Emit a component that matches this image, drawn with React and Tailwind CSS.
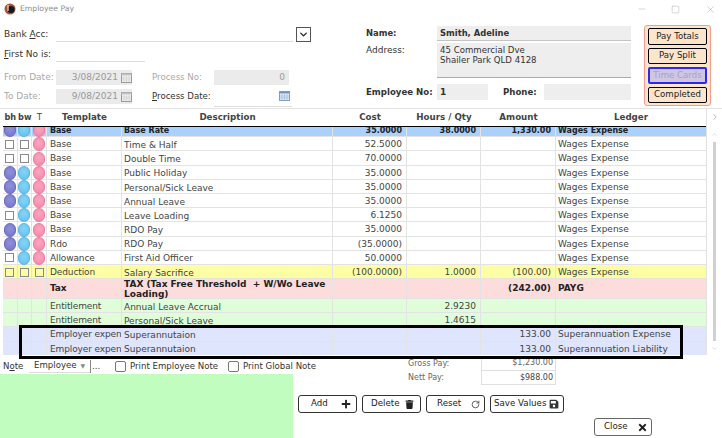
import React from 'react';
import { FaPlus, FaTrash, FaSave, FaTimes } from 'react-icons/fa';
import { RotateCw, ChevronRight, ChevronUp, ChevronDown, Minus, Square, X } from 'lucide-react';

const COLS = 'grid grid-cols-[14.5px_14.5px_15px_75px_211px_74px_74px_75px_150px]';

const rows = [
  { bh: 1, bw: 1, t: 1, template: 'Base', desc: 'Base Rate', cost: '35.0000', qty: '38.0000', amount: '1,330.00', ledger: 'Wages Expense', bg: 'bg-[#a9d1fb]', selected: true },
  { bh: 0, bw: 0, t: 1, template: 'Base', desc: 'Time & Half', cost: '52.5000', ledger: 'Wages Expense' },
  { bh: 0, bw: 0, t: 1, template: 'Base', desc: 'Double Time', cost: '70.0000', ledger: 'Wages Expense' },
  { bh: 1, bw: 1, t: 1, template: 'Base', desc: 'Public Holiday', cost: '35.0000', ledger: 'Wages Expense' },
  { bh: 1, bw: 1, t: 1, template: 'Base', desc: 'Personal/Sick Leave', cost: '35.0000', ledger: 'Wages Expense' },
  { bh: 1, bw: 1, t: 1, template: 'Base', desc: 'Annual Leave', cost: '35.0000', ledger: 'Wages Expense' },
  { bh: 0, bw: 1, t: 1, template: 'Base', desc: 'Leave Loading', cost: '6.1250', ledger: 'Wages Expense' },
  { bh: 1, bw: 1, t: 1, template: 'Base', desc: 'RDO Pay', cost: '35.0000', ledger: 'Wages Expense' },
  { bh: 1, bw: 1, t: 1, template: 'Rdo', desc: 'RDO Pay', cost: '(35.0000)', ledger: 'Wages Expense' },
  { bh: 0, bw: 1, t: 1, template: 'Allowance', desc: 'First Aid Officer', cost: '50.0000', ledger: 'Wages Expense' },
  { bh: 0, bw: 0, t: 0, template: 'Deduction', desc: 'Salary Sacrifice', cost: '(100.0000)', qty: '1.0000', amount: '(100.00)', ledger: 'Wages Expense', bg: 'bg-[#fdfda4]' },
  { template: 'Tax', desc: 'TAX (Tax Free Threshold  + W/Wo Leave Loading)', amount: '(242.00)', ledger: 'PAYG', bg: 'bg-[#fddcdc]', bold: true, tall: true },
  { template: 'Entitlement', desc: 'Annual Leave Accrual', qty: '2.9230', bg: 'bg-[#e0fdda]' },
  { template: 'Entitlement', desc: 'Personal/Sick Leave', qty: '1.4615', bg: 'bg-[#e0fdda]' },
  { template: 'Employer expen', desc: 'Superannutaion', amount: '133.00', ledger: 'Superannuation Expense', bg: 'bg-[#dee5fd]' },
  { template: 'Employer expen', desc: 'Superannutaion', amount: '133.00', ledger: 'Superannuation Liability', bg: 'bg-[#dee5fd]' },
];

const Dot = ({ on, color }) => {
  if (on === undefined) return <span />;
  if (!on) return <span className="w-[9px] h-[9px] border border-[#8a8a8a] bg-transparent" />;
  return <span className={`w-[12px] h-[14px] shrink-0 rounded-full border ${color}`} />;
};

const Cell = ({ children, className = '' }) => (
  <div className={`flex items-center min-w-0 border-r border-[#e3e3e3] ${className}`}>{children}</div>
);

const Row = ({ r }) => {
  const weight = r.selected ? 'font-bold text-[8px] text-[#222]' : r.bold ? 'font-bold text-[#222]' : '';
  const shift = r.tall ? '' : 'pt-px';
  return (
    <div className={`${COLS} ${r.tall ? 'h-[20px]' : 'h-[14.2px]'} border-b border-[#e3e3e3] ${r.bg || ''} ${weight}`}>
      <Cell className="justify-center"><Dot on={r.bh} color="bg-[radial-gradient(circle_at_50%_40%,#9090dc,#7474c8)] border-[#6a6ac0]" /></Cell>
      <Cell className="justify-center"><Dot on={r.bw} color="bg-[radial-gradient(circle_at_50%_40%,#86d4f6,#62bfec)] border-[#58b4e0]" /></Cell>
      <Cell className="justify-center"><Dot on={r.t} color="bg-[radial-gradient(circle_at_50%_40%,#fba6c2,#f485a8)] border-[#ea7ca0]" /></Cell>
      <Cell className={`pl-[3px] whitespace-nowrap overflow-hidden tracking-[-0.12px] ${shift}`}>{r.template}</Cell>
      <Cell className={`pl-[2px] pr-1 leading-[10px] whitespace-pre-wrap ${shift}`}>{r.desc}</Cell>
      <Cell className={`justify-end pr-[4px] ${shift}`}>{r.cost}</Cell>
      <Cell className={`justify-end pr-[4px] ${shift}`}>{r.qty}</Cell>
      <Cell className={`justify-end pr-[4px] ${shift}`}>{r.amount}</Cell>
      <Cell className={`pl-[2px] border-r-0 whitespace-nowrap ${shift}`}>{r.ledger}</Cell>
    </div>
  );
};

const Label = ({ children, className = '' }) => <span className={`whitespace-nowrap ${className}`}>{children}</span>;

const CalendarIcon = ({ blue }) => (
  <svg width="11" height="11" viewBox="0 0 11 11" className="shrink-0">
    <rect x="0.5" y="1.5" width="10" height="9" fill={blue ? '#e6eef8' : '#f2f2f2'} stroke={blue ? '#7ea0c4' : '#9a9a9a'} />
    <rect x="0.5" y="1.5" width="10" height="2" fill={blue ? '#6f97c4' : '#c4c4c4'} />
    <path d="M3 4v6M5.5 4v6M8 4v6M1 6h9M1 8h9" stroke={blue ? '#9db8d6' : '#d0d0d0'} strokeWidth="0.7" />
  </svg>
);

const PanelButton = ({ children, active }) => (
  <div className={`h-[16.5px] flex items-center justify-center rounded-[2px] text-[8.6px] ${active ? 'border-2 border-[#2a2ae8] bg-[#cfc6e4] text-[#a8a2c0]' : 'border border-black text-[#222]'}`}>
    {children}
  </div>
);

const ActionButton = ({ label, icon, className = '' }) => (
  <div className={`h-[18px] flex items-center justify-between border border-[#333] rounded-[3px] text-[#222] text-[8.7px] ${className}`}>
    <span>{label}</span>
    {icon}
  </div>
);

export default function App() {
  return (
    <div className="relative w-[722px] h-[438px] overflow-hidden bg-white text-[9px] text-[#444] font-['DejaVu_Sans',sans-serif]">
      {/* title bar */}
      <div className="h-[18px] flex items-center pl-[4px]">
        <svg width="12" height="12" viewBox="0 0 12 12" className="shrink-0">
          <circle cx="6" cy="6" r="5.5" fill="#a8553a" />
          <circle cx="7" cy="6.5" r="3.6" fill="#17181f" />
          <path d="M4 2v6" stroke="#f3e6dc" strokeWidth="1.2" />
        </svg>
        <span className="ml-[4px] text-[7.7px] text-[#8d8d8d]">Employee Pay</span>
        <div className="ml-auto flex items-center text-[#9a9a9a]">
          <Minus size={10} strokeWidth={1} />
          <Square size={9} strokeWidth={1} className="ml-[24px]" />
          <X size={11} strokeWidth={1} className="ml-[25px] mr-[6px]" />
        </div>
      </div>

      {/* top section */}
      <div className="h-[90px] flex">
        <div className="w-[366px] pl-[4px] flex flex-col shrink-0 text-[#333]">
          <div className="h-[24px] flex items-end">
            <Label className="w-[52px] pb-[1px]">Bank <u>A</u>cc:</Label>
            <div className="w-[237px] h-[16px] border-b border-[#ddd]" />
            <div className="ml-[3px] w-[15px] h-[15px] border border-[#555] flex items-center justify-center">
              <ChevronDown size={11} strokeWidth={3} className="text-[#222]" />
            </div>
          </div>
          <div className="h-[20px] flex items-end">
            <Label className="w-[52px] pb-[1px]"><u>F</u>irst No is:</Label>
            <div className="w-[89px] h-[16px] border-b border-[#ddd]" />
          </div>
          <div className="mt-[8px] h-[15px] flex items-center">
            <Label className="w-[52px] text-[#a8a8a8]">From Date:</Label>
            <div className="w-[76px] h-[15px] bg-[#ebebeb] flex items-center justify-end text-[#999]">
              3/08/2021<span className="ml-[3px]" /><CalendarIcon />
            </div>
            <Label className="ml-[20px] w-[62px] text-[8.6px] text-[#a8a8a8]">Process No:</Label>
            <div className="w-[75px] h-[15px] bg-[#ebebeb] flex items-center justify-end pr-[4px] text-[#999]">0</div>
          </div>
          <div className="mt-[4px] h-[15px] flex items-center">
            <Label className="w-[52px] text-[#a8a8a8]">To Date:</Label>
            <div className="w-[76px] h-[15px] bg-[#ebebeb] flex items-center justify-end text-[#999]">
              9/08/2021<span className="ml-[3px]" /><CalendarIcon />
            </div>
            <Label className="ml-[20px] w-[62px] text-[8.6px]"><u>P</u>rocess Date:</Label>
            <div className="w-[78px] h-[17px] border-b border-[#ddd] flex items-start justify-end pr-[2px] mt-[3px]"><CalendarIcon blue /></div>
          </div>
        </div>

        <div className="w-[265px] shrink-0 flex flex-col pt-[8px] text-[#333]">
          <div className="flex h-[15px]">
            <Label className="w-[71px] font-bold text-[8.4px] pt-[1px]">Name:</Label>
            <div className="w-[194px] bg-[#eeeeee] border-b border-[#c4c4c4] pl-[3px] font-bold text-[8.4px] leading-[14px]">Smith, Adeline</div>
          </div>
          <div className="flex h-[35px] mt-[2px]">
            <Label className="w-[71px] pt-[1px]">Address:</Label>
            <div className="w-[194px] bg-[#eeeeee] border-b border-[#aaa] pl-[3px] pt-[2px] text-[8.6px] leading-[10px]">45 Commercial Dve<br />Shailer Park QLD 4128</div>
          </div>
          <div className="flex h-[16px] mt-[6px] items-center">
            <Label className="w-[71px] font-bold text-[8.6px]">Employee No:</Label>
            <div className="w-[51px] h-full bg-[#eeeeee] pl-[3px] font-bold leading-[17px]">1</div>
            <Label className="ml-[15px] w-[41px] font-bold text-[8.6px]">Phone:</Label>
            <div className="w-[87px] h-full bg-[#eeeeee]" />
          </div>
        </div>

        <div className="ml-[13px] mt-[7px] w-[67px] h-[81px] border border-[#f59c8c] rounded-[3px] bg-[#fde5cc] px-[3px] pt-[2px] flex flex-col gap-[3px]">
          <PanelButton>Pay Totals</PanelButton>
          <PanelButton>Pay Split</PanelButton>
          <PanelButton active>Time Cards</PanelButton>
          <PanelButton>Completed</PanelButton>
        </div>
      </div>

      {/* table */}
      <div className="flex border-t border-[#e3e3e3] pl-[3px]">
        <div className="w-[703px] shrink-0">
          <div className={`${COLS} h-[18px] border-b border-black font-bold text-[8.7px] text-[#444] items-center`}>
            <span className="text-center text-[8.2px]">bh</span>
            <span className="text-center text-[8.2px]">bw</span>
            <span className="text-center font-normal">T</span>
            <span className="text-center">Template</span>
            <span className="text-center">Description</span>
            <span className="text-center">Cost</span>
            <span className="text-center">Hours / Qty</span>
            <span className="text-center">Amount</span>
            <span className="text-center">Ledger</span>
          </div>
          <div className="h-[228px] overflow-hidden">
            <div className="mt-[-4px]">
              {rows.map((r, i) => <Row key={i} r={r} />)}
            </div>
          </div>
        </div>
        <div className="w-[16px] flex flex-col items-center text-[#c8c8c8] border-l border-[#e3e3e3]">
          <ChevronRight size={10} className="mt-[3px] mb-[9px] text-[#aaa]" />
          <ChevronUp size={7} />
          <div className="w-[3px] flex-1 bg-[#d0d0d0] mt-[4px] mb-[4px]" />
          <ChevronDown size={7} className="mb-[3px]" />
        </div>
      </div>

      {/* bottom section */}
      <div className="flex">
        <div className="w-[293px] shrink-0">
          <div className="h-[19px] flex items-center pl-[3px] pt-[3px] whitespace-nowrap text-[8.6px] text-[#333]">
            <span className="w-[26px] shrink-0">N<u>o</u>te</span>
            <div className="w-[61px] h-[13px] shrink-0 border-b border-[#ddd] flex items-center pl-[5px]">
              Employee<span className="ml-[4px] text-[6px] text-[#888]">▼</span>
            </div>
            <span className="border-l border-[#888] pl-[1px] h-[13px] leading-[12px] w-[25px] shrink-0">...</span>
            <span className="w-[11px] h-[11px] shrink-0 border border-[#777] rounded-[2px]" />
            <span className="ml-[4px] w-[98px] shrink-0">Print Employee Note</span>
            <span className="w-[11px] h-[11px] shrink-0 border border-[#777] rounded-[2px]" />
            <span className="ml-[4px] shrink-0">Print Global Note</span>
          </div>
          <div className="h-[64px] bg-[#c1fdbf]" />
        </div>
        <div className="pl-[5px] flex flex-col">
          <div className="ml-[110px] mt-px flex flex-col text-[8px] text-[#666]">
            <div className="flex h-[15px] items-center">
              <span className="w-[73px]">Gross Pay:</span>
              <div className="w-[75px] h-full border-x border-b border-[#e0e0e0] flex items-center justify-end pr-[2px]">$1,230.00</div>
            </div>
            <div className="flex h-[14px] items-center">
              <span className="w-[73px]">Nett Pay:</span>
              <div className="w-[75px] h-full border-x border-b border-[#e0e0e0] flex items-center justify-end pr-[2px] text-[#444]">$988.00</div>
            </div>
          </div>
          <div className="flex gap-[5px] mt-[10px]">
            <ActionButton label="Add" className="w-[59px] pl-[12px] pr-[5px]" icon={<FaPlus size={10} className="text-[#222]" />} />
            <ActionButton label="Delete" className="w-[59px] pl-[8px] pr-[6px]" icon={<FaTrash size={9} className="text-[#222]" />} />
            <ActionButton label="Reset" className="w-[59px] pl-[10px] pr-[4px]" icon={<RotateCw size={9} className="text-[#333]" />} />
            <ActionButton label="Save Values" className="w-[74px] pl-[3px] pr-[4px]" icon={<FaSave size={10} className="text-[#333]" />} />
          </div>
          <div className="flex mt-[5px] ml-[296px]">
            <ActionButton label="Close" className="w-[58px] h-[18px] pl-[9px] pr-[3px] border-[#666] rounded-[2px]" icon={<FaTimes size={11} className="text-[#222]" />} />
          </div>
        </div>
      </div>

      {/* highlight drawn over the two super rows */}
      <div className="absolute left-[19px] top-[325px] w-[664px] h-[34px] border-[3px] border-black" />
    </div>
  );
}
